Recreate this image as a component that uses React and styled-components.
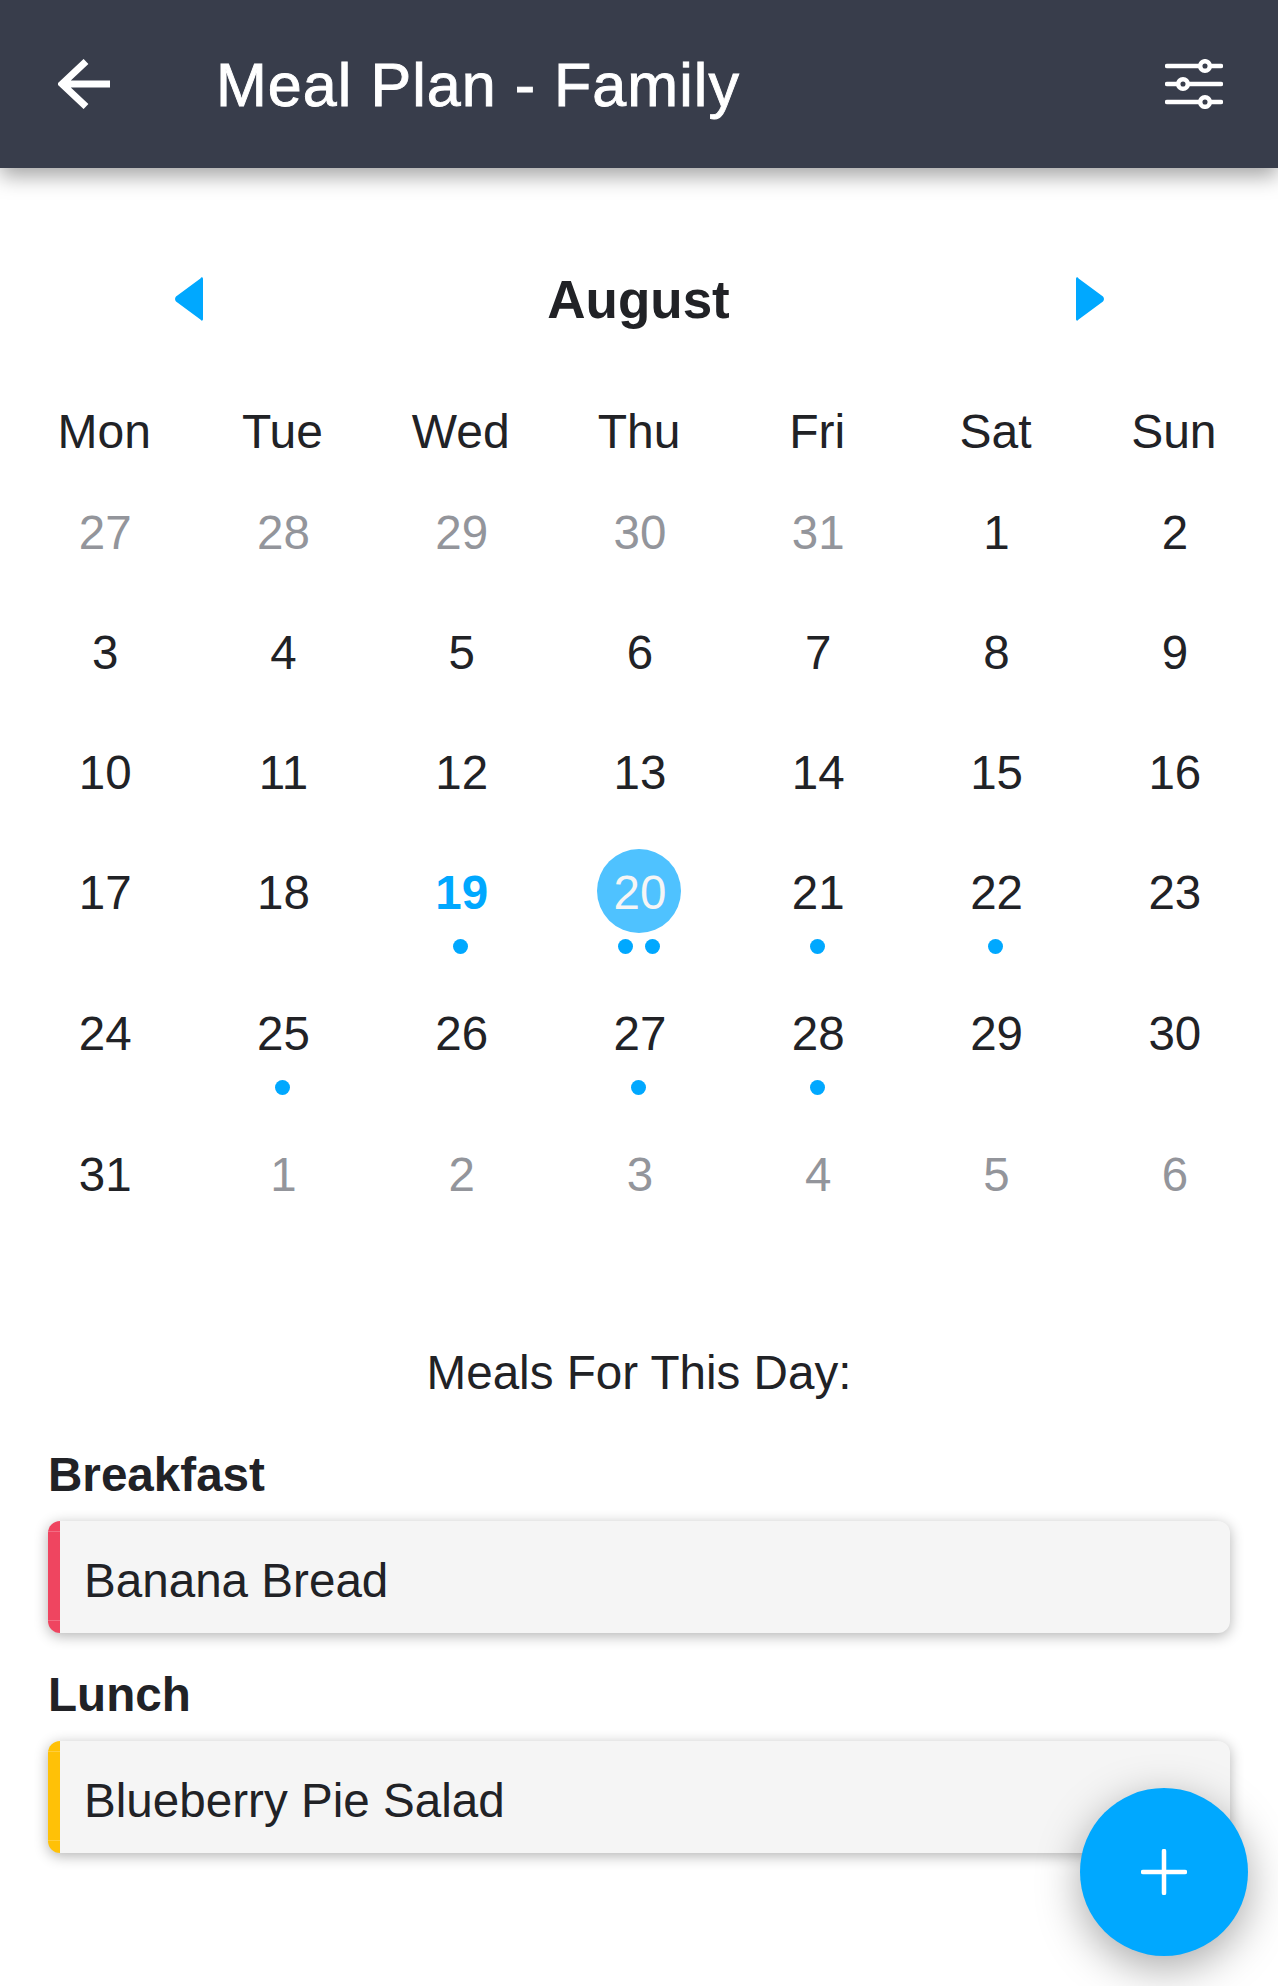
import styled, { createGlobalStyle } from "styled-components";

const GlobalStyle = createGlobalStyle`
  html, body {
    margin: 0;
    padding: 0;
    background: #fff;
  }
  body {
    font-family: "Liberation Sans", Arial, sans-serif;
    color: #212226;
  }
`;

const WEEK_DAYS = ["Mon", "Tue", "Wed", "Thu", "Fri", "Sat", "Sun"];

// n: number, muted: other month, dots: meals planned that day
const WEEKS = [
  [{ n: 27, muted: true }, { n: 28, muted: true }, { n: 29, muted: true }, { n: 30, muted: true }, { n: 31, muted: true }, { n: 1 }, { n: 2 }],
  [{ n: 3 }, { n: 4 }, { n: 5 }, { n: 6 }, { n: 7 }, { n: 8 }, { n: 9 }],
  [{ n: 10 }, { n: 11 }, { n: 12 }, { n: 13 }, { n: 14 }, { n: 15 }, { n: 16 }],
  [{ n: 17 }, { n: 18 }, { n: 19, today: true, dots: 1 }, { n: 20, selected: true, dots: 2 }, { n: 21, dots: 1 }, { n: 22, dots: 1 }, { n: 23 }],
  [{ n: 24 }, { n: 25, dots: 1 }, { n: 26 }, { n: 27, dots: 1 }, { n: 28, dots: 1 }, { n: 29 }, { n: 30 }],
  [{ n: 31 }, { n: 1, muted: true }, { n: 2, muted: true }, { n: 3, muted: true }, { n: 4, muted: true }, { n: 5, muted: true }, { n: 6, muted: true }],
];

const MEALS = [
  { type: "Breakfast", name: "Banana Bread", color: "#ef4560" },
  { type: "Lunch", name: "Blueberry Pie Salad", color: "#ffc107" },
];

function App() {
  return (
    <Page>
      <GlobalStyle />
      <Header>
        <BackIcon viewBox="0 0 52 50" aria-hidden="true">
          <path d="M52 25H6M28 2.500L4 25l24 22.500" fill="none" stroke="#fff" strokeWidth="7" />
        </BackIcon>
        <Title>Meal Plan - Family</Title>
        <FilterIcon viewBox="0 0 58 50" aria-hidden="true">
          <g stroke="#fff" strokeWidth="4.5" strokeLinecap="round">
            <path d="M2 7h54M2 25h54M2 43h54" />
          </g>
          <g fill="#383d4b" stroke="#fff" strokeWidth="4.5">
            <circle cx="40" cy="7" r="4.8" />
            <circle cx="18" cy="25" r="4.8" />
            <circle cx="40" cy="43" r="4.8" />
          </g>
        </FilterIcon>
      </Header>

      <MonthNav>
        <MonthArrow viewBox="0 0 28 44" aria-hidden="true">
          <path d="M28 2v40c0 1.800-1.600 2.400-2.600.6L1 24.500c-1.300-1.800-1.300-3.200 0-5L25.400 1.400C26.400-.4 28 .2 28 2z" fill="#00a8ff" />
        </MonthArrow>
        <MonthName>August</MonthName>
        <MonthArrow viewBox="0 0 28 44" aria-hidden="true">
          <path d="M0 2v40c0 1.800 1.600 2.400 2.600.6L27 24.500c1.300-1.800 1.300-3.200 0-5L2.600 1.400C1.600-.4 0 .2 0 2z" fill="#00a8ff" />
        </MonthArrow>
      </MonthNav>

      <Calendar>
        {WEEK_DAYS.map((day) => (
          <WeekDay key={day}>{day}</WeekDay>
        ))}
        {WEEKS.flat().map((day, index) => (
          <DayCell key={index}>
            <DayNumber $muted={day.muted} $today={day.today} $selected={day.selected}>
              {day.n}
            </DayNumber>
            {day.dots && (
              <Dots>
                {Array.from({ length: day.dots }).map((_, i) => (
                  <Dot key={i} />
                ))}
              </Dots>
            )}
          </DayCell>
        ))}
      </Calendar>

      <Meals>
        <MealsTitle>Meals For This Day:</MealsTitle>
        {MEALS.map((meal) => (
          <MealGroup key={meal.type}>
            <MealType>{meal.type}</MealType>
            <MealCard $color={meal.color}>
              <MealName>{meal.name}</MealName>
            </MealCard>
          </MealGroup>
        ))}
      </Meals>

      <AddButton aria-label="Add meal">
        <svg width="46" height="46" viewBox="0 0 46 46" aria-hidden="true">
          <path d="M23 2v42M2 23h42" stroke="#fff" strokeWidth="4.500" strokeLinecap="round" />
        </svg>
      </AddButton>
    </Page>
  );
}

const Page = styled.div`
  position: relative;
  width: 100%;
  height: 100vh;
  overflow: hidden;
  background: #fff;
`;

const Header = styled.header`
  height: 168px;
  box-sizing: border-box;
  padding: 0 55px 0 58px;
  display: flex;
  align-items: center;
  background: #383d4b;
  box-shadow: 0 8px 20px rgba(0, 0, 0, 0.36);
`;

const BackIcon = styled.svg`
  width: 52px;
  height: 50px;
  flex: none;
`;

const Title = styled.h1`
  flex: 1;
  margin: 2px 0 0 106px;
  font-size: 61px;
  font-weight: 400;
  line-height: 70px;
  letter-spacing: 1.05px;
  color: #fff;
  -webkit-text-stroke: 0.9px #fff;
`;

const FilterIcon = styled.svg`
  width: 58px;
  height: 50px;
  flex: none;
`;

const MonthNav = styled.div`
  margin-top: 102px;
  height: 60px;
  padding: 0 174px 0 175px;
  display: flex;
  align-items: center;
  justify-content: space-between;
`;

const MonthArrow = styled.svg`
  width: 28px;
  height: 44px;
  flex: none;
  margin-top: -2px;
`;

const MonthName = styled.div`
  margin-left: -2px;
  font-size: 53px;
  font-weight: 700;
  line-height: 60px;
`;

const Calendar = styled.div`
  margin-top: 60px;
  padding: 0 15px;
  display: grid;
  grid-template-columns: repeat(7, 1fr);
`;

const WeekDay = styled.div`
  height: 99px;
  font-size: 48px;
  line-height: 84px;
  text-align: center;
`;

const DayCell = styled.div`
  padding-bottom: 36px;
  display: flex;
  flex-direction: column;
  align-items: center;
`;

const DayNumber = styled.div`
  width: 84px;
  height: 84px;
  border-radius: 50%;
  font-size: 47.5px;
  font-weight: ${({ $today }) => ($today ? 700 : 400)};
  line-height: 88px;
  text-indent: 2px;
  text-align: center;
  background: ${({ $selected }) => ($selected ? "#4fc2ff" : "transparent")};
  color: ${({ $muted, $today, $selected }) => {
    if ($selected) return "#f5f5f5";
    if ($today) return "#00a8ff";
    if ($muted) return "#93959b";
    return "#212226";
  }};
`;

const Dots = styled.div`
  margin-top: 6px;
  display: flex;
  gap: 12px;
`;

const Dot = styled.span`
  width: 15px;
  height: 15px;
  border-radius: 50%;
  background: #00a8ff;
`;

const Meals = styled.section`
  padding: 0 48px;
`;

const MealsTitle = styled.h2`
  margin: 92px 0 44px;
  font-size: 47.6px;
  font-weight: 400;
  line-height: 60px;
  text-align: center;
`;

const MealGroup = styled.div`
  margin-top: 34px;
`;

const MealType = styled.h3`
  margin: 0 0 18px;
  font-size: 47.6px;
  font-weight: 700;
  line-height: 56px;
`;

const MealCard = styled.div`
  position: relative;
  height: 112px;
  box-sizing: border-box;
  padding: 0 0 0 24px;
  display: flex;
  align-items: center;
  border-left: 12px solid ${({ $color }) => $color};
  border-radius: 12px;
  background: #f5f5f5;
  box-shadow: 0 3px 14px rgba(0, 0, 0, 0.3);

  /* the accent stripe has two faint seams in the original */
  &::before {
    content: "";
    position: absolute;
    left: -12px;
    top: 10px;
    width: 12px;
    height: 90px;
    box-sizing: border-box;
    border-top: 1px solid rgba(255, 255, 255, 0.22);
    border-bottom: 1px solid rgba(255, 255, 255, 0.22);
  }
`;

const MealName = styled.div`
  margin-top: 7px;
  font-size: 47.6px;
  line-height: 56px;
`;

const AddButton = styled.button`
  position: absolute;
  right: 30px;
  bottom: 30px;
  width: 168px;
  height: 168px;
  padding: 0;
  border: none;
  border-radius: 50%;
  display: flex;
  align-items: center;
  justify-content: center;
  background: #00a8ff;
  box-shadow: 0 12px 44px rgba(0, 0, 0, 0.34);
`;

export default App;
